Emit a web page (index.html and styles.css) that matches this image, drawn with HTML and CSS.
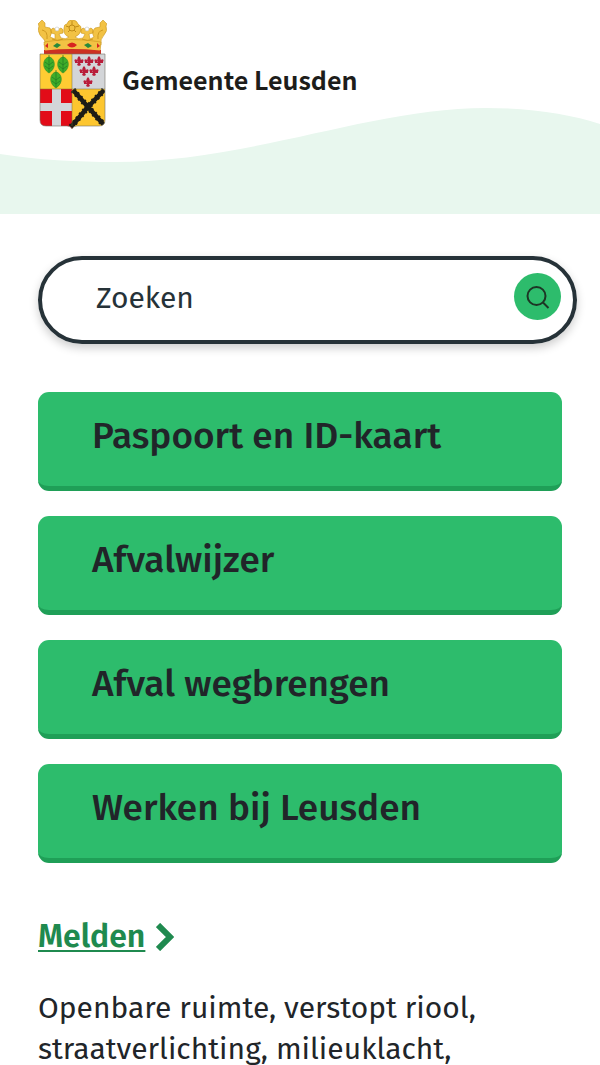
FILE: index.html
```
<!DOCTYPE html>
<html lang="nl">
<head>
    <meta charset="UTF-8">
    <meta name="viewport" content="width=device-width, initial-scale=1.0">
    <title>Gemeente Leusden</title>
    <link rel="stylesheet" href="styles.css">
</head>
<body>
    <header class="site-header">
        <svg class="wave" viewBox="0 0 600 106" preserveAspectRatio="none" aria-hidden="true">
            <path d="M0 46C38 52 77 54 115 54C250 54 370 0 486 0C530 0 570 6 600 16V106H0Z" fill="#e8f7ee"/>
        </svg>
        <a class="logo" href="#">
            <svg class="crest" viewBox="0 0 69 109" aria-hidden="true">
                <defs>
                    <g id="leaf">
                        <path d="M0-8C6-7 8 3 0 8C-8 3-6-7 0-8Z" fill="#3fae2a" stroke="#238a27" stroke-width=".6"/>
                        <path d="M0-10V7M-4-3L0 0L4-3M-4 1L0 4L4 1" fill="none" stroke="#1f7a24" stroke-width=".7"/>
                    </g>
                    <g id="lily">
                        <path d="M0-5Q3-2 1 2H-1Q-3-2 0-5ZM-1 1C-2-3-6-2-4 1ZM1 1C2-3 6-2 4 1ZM-4 1H4V2H-4ZM-1 2H1L2 4L0 5L-2 4Z" fill="#b91d3a"/>
                    </g>
                    <clipPath id="shield"><path d="M2 34H67V100Q67 106 61 106H39Q35 106 34 109Q33 106 29 106H8Q2 106 2 100Z"/></clipPath>
                </defs>
                <!-- crown -->
                <g stroke="#c9961c" stroke-width=".6" fill="#f2c244">
                    <path d="M6 25C9 21 5 19 2 15Q-1 10 1 6L0 4L2 2L4 0L7 3L7 7L12 8Q15 12 12 17L17 19V14L13 13Q12 9 15 8L19 10L23 8Q26 9 25 13L21 14L23 18Q28 20 31 17Q25 15 26 8Q26 4 29 4Q30 0 34 0Q39 0 40 4Q44 6 43 10Q42 15 37 17Q40 20 45 18L47 14L43 13Q42 9 45 8L49 10L53 8Q56 9 55 13L51 14L52 19L56 17Q53 12 57 8L62 7L62 3L65 0L67 2L69 4L68 6Q70 11 66 15Q62 19 63 25Z"/>
                    <path d="M6 22Q34 17 63 22L62 32Q34 29 7 32Z"/>
                </g>
                <path d="M4 10Q10 11 9 19M65 10Q59 11 60 19M14 19Q20 22 25 19M44 19Q49 22 55 19" fill="none" stroke="#cf9a20" stroke-width="1"/>
                <g fill="none" stroke="#c08c18"><circle cx="34" cy="8" r="3"/><path d="M34 1V5M28 6L31 7M41 6L37 7M30 12L32 10M38 12L36 10"/></g>
                <g fill="#fff" stroke="#bbb" stroke-width=".5"><circle cx="19" cy="9" r="2"/><circle cx="49" cy="9" r="2"/></g>
                <path d="M6 30Q34 26 63 30V34H6Z" fill="#cc3022"/>
                <path d="M7 29Q34 26 62 29" fill="none" stroke="#f2c244" stroke-width="3"/>
                <path d="M29 25Q34 20 39 25Q34 30 29 25ZM7 26L10 23V28ZM62 26L59 23V28Z" fill="#d82520"/>
                <path d="M15 26L19 23L23 25L19 28ZM46 25L50 23L54 26L50 28Z" fill="#278a3b"/>
                <!-- shield -->
                <g clip-path="url(#shield)">
                    <path d="M2 34H35V69H2Z" fill="#fc3"/>
                    <path d="M34 34H67V69H34Z" fill="#d3d5d8"/>
                    <path d="M2 69H34V109H2Z" fill="#e20c18"/>
                    <path d="M34 69H67V109H34Z" fill="#fdc62f"/>
                    <path d="M14 69H23V83H34V91H23V109H14V91H2V83H14Z" fill="#d3d5d8"/>
                    <path d="M35 70L50 87L66 70M33 107L50 87L66 105" fill="none" stroke="#1d1c16" stroke-width="4.500"/>
                    <path d="M35 70L50 87L66 70M33 107L50 87L66 105" fill="none" stroke="#1d1c16" stroke-width="6" stroke-dasharray="2 3"/>
                </g>
                <path d="M34 34V106M2 69H67" stroke="#7b6c38" stroke-width=".5"/>
                <path d="M2 34H67V100Q67 106 61 106H39Q35 106 34 109Q33 106 29 106H8Q2 106 2 100Z" fill="none" stroke="#77736a" stroke-width=".6"/>
                <use href="#leaf" x="11" y="45"/><use href="#leaf" x="25" y="45"/><use href="#leaf" x="18" y="60"/>
                <use href="#lily" x="41" y="41"/><use href="#lily" x="51" y="41"/><use href="#lily" x="61" y="41"/>
                <use href="#lily" x="46" y="51"/><use href="#lily" x="56" y="51"/><use href="#lily" x="50" y="62"/>
            </svg>
            <span class="logo-text">Gemeente Leusden</span>
        </a>
    </header>
    <main>
        <form class="search" role="search">
            <input class="search-input" type="search" placeholder="Zoeken" aria-label="Zoeken">
            <button class="search-button" type="submit" aria-label="Zoek">
                <svg class="search-icon" viewBox="0 0 24 24" aria-hidden="true">
                    <circle cx="10.500" cy="11" r="9"/><path d="M17 17.500L22.500 23"/>
                </svg>
            </button>
        </form>
        <nav class="top-tasks">
            <a class="task" href="#">Paspoort en ID-kaart</a>
            <a class="task" href="#">Afvalwijzer</a>
            <a class="task" href="#">Afval wegbrengen</a>
            <a class="task" href="#">Werken bij Leusden</a>
        </nav>
        <section class="topic">
            <h2 class="topic-title">
                <a class="topic-link" href="#">Melden</a>
                <svg class="chevron" viewBox="0 0 18 28" aria-hidden="true"><path d="M2 2L14 14L2 26"/></svg>
            </h2>
            <p class="topic-text">Openbare ruimte, verstopt riool, straatverlichting, milieuklacht,</p>
        </section>
    </main>
</body>
</html>
```
FILE: styles.css
```
* {
    box-sizing: border-box;
}

body {
    margin: 0;
    background-color: #fff;
    color: #212529;
    font-family: "Fira Sans", "Noto Sans", sans-serif;
    font-size: 30px;
    line-height: 41px;
}

.site-header {
    position: relative;
    height: 214px;
    padding: 20px 38px;
}

/* green wave behind the logo */
.wave {
    position: absolute;
    left: 0;
    bottom: 0;
    width: 100%;
    height: 106px;
}

.logo {
    position: relative;
    display: flex;
    align-items: center;
    gap: 15px;
    color: #1d1d1b;
    text-decoration: none;
}

.crest {
    width: 69px;
    height: 109px;
}

.logo-text {
    margin-top: 10px;
    font-family: "Noto Sans CJK SC", "Noto Sans", sans-serif;
    font-size: 25px;
    font-weight: 600;
}

main {
    padding: 42px 38px 0;
}

.search {
    display: flex;
    align-items: flex-start;
    height: 88px;
    margin-right: -15px;
    padding: 13px 12px 13px 13px;
    border: 4px solid #263238;
    border-radius: 44px;
    box-shadow: 0 4px 10px rgba(0, 0, 0, 0.2);
}

.search-input {
    flex: 1;
    min-width: 0;
    height: 50px;
    padding: 0 0 0 41px;
    border: 0;
    outline: 0;
    background: transparent;
    color: #263238;
    font: inherit;
}

.search-input::placeholder {
    color: #263238;
    opacity: 1;
}

.search-button {
    display: flex;
    align-items: center;
    justify-content: center;
    width: 47px;
    height: 47px;
    padding: 0;
    border: 0;
    border-radius: 50%;
    background-color: #2dbc6c;
    cursor: pointer;
}

.search-icon {
    width: 24px;
    height: 24px;
    fill: none;
    stroke: #1d3525;
    stroke-width: 2;
}

.top-tasks {
    display: flex;
    flex-direction: column;
    gap: 25px;
    margin-top: 48px;
}

.task {
    height: 99px;
    padding: 22px 54px;
    border-bottom: 5px solid #1f9f57;
    border-radius: 11px;
    background-color: #2dbc6c;
    color: #212529;
    font-size: 37px;
    font-weight: 500;
    line-height: 44px;
    text-decoration: none;
}

.topic {
    margin-top: 53px;
}

.topic-title {
    display: flex;
    align-items: center;
    gap: 11px;
    margin: 0;
    font-size: 32px;
    font-weight: 600;
    line-height: 41px;
}

.topic-link {
    color: #1f8a4f;
    text-decoration-thickness: 2px;
    text-underline-offset: 3px;
}

.chevron {
    width: 18px;
    height: 28px;
    fill: none;
    stroke: #1f8a4f;
    stroke-width: 6;
}

.topic-text {
    margin: 31px 0 0;
}
```
